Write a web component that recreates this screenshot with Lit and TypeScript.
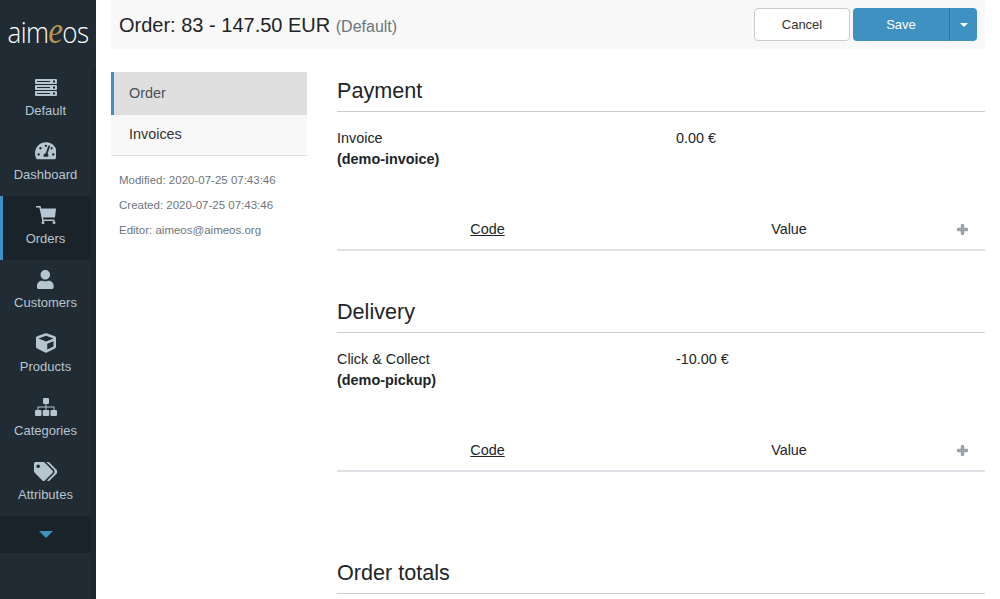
import { LitElement, html, css, svg } from "lit";
import { customElement } from "lit/decorators.js";

const ICONS: Record<string, [string, string]> = {
  server: ["0 0 22 17", "M1 0H21a1 1 0 0 1 1 1V4a1 1 0 0 1-1 1H1a1 1 0 0 1-1-1V1a1 1 0 0 1 1-1zM2 2V3H15V2zM18 1.5V3.5H20V1.5zM1 6H21a1 1 0 0 1 1 1V10a1 1 0 0 1-1 1H1a1 1 0 0 1-1-1V7a1 1 0 0 1 1-1zM2 8V9H15V8zM18 7.5V9.5H20V7.5zM1 12H21a1 1 0 0 1 1 1V16a1 1 0 0 1-1 1H1a1 1 0 0 1-1-1V13a1 1 0 0 1 1-1zM2 14V15H15V14zM18 13.5V15.5H20V13.5z"],
  gauge: ["0 0 576 512", "M288 32C128.94 32 0 160.94 0 320c0 52.8 14.25 102.26 39.06 144.8 5.61 9.62 16.3 15.2 27.44 15.2h443c11.14 0 21.83-5.58 27.44-15.2C561.75 422.26 576 372.8 576 320c0-159.06-128.94-288-288-288zm0 64c14.71 0 26.58 10.13 30.32 23.65-1.11 2.26-2.64 4.23-3.45 6.67l-9.22 27.67c-5.13 3.49-10.97 6.01-17.64 6.01-17.67 0-32-14.33-32-32S270.33 96 288 96zM96 384c-17.67 0-32-14.33-32-32s14.33-32 32-32 32 14.33 32 32-14.33 32-32 32zm48-160c-17.67 0-32-14.33-32-32s14.33-32 32-32 32 14.33 32 32-14.33 32-32 32zm246.77-72.41l-61.33 184C343.13 347.33 352 364.54 352 384c0 11.72-3.38 22.55-8.88 32H232.88c-5.5-9.45-8.88-20.28-8.88-32 0-33.94 26.5-61.43 59.9-63.59l61.34-184.01c4.17-12.56 17.73-19.45 30.36-15.17 12.57 4.19 19.35 17.79 15.17 30.36zm14.66 57.2l15.52-46.55c3.47-1.29 7.13-2.23 11.05-2.23 17.67 0 32 14.33 32 32s-14.33 32-32 32c-11.38-.01-20.89-6.27-26.57-15.22zM480 384c-17.67 0-32-14.33-32-32s14.33-32 32-32 32 14.33 32 32-14.33 32-32 32z"],
  cart: ["0 0 20 18", "M5.2 2.500H20L19 11.500H7zM0 0H4.600L7.500 13.500H18.500V15H6.300L3.400 1.400H0zM7 15a1.500 1.500 0 1 0 0 3a1.500 1.500 0 1 0 0-3zM18 15a1.500 1.500 0 1 0 0 3a1.500 1.500 0 1 0 0-3z"],
  user: ["0 0 448 512", "M224 256c70.7 0 128-57.3 128-128S294.7 0 224 0 96 57.3 96 128s57.3 128 128 128zm89.6 32h-16.7c-22.2 10.2-46.9 16-72.9 16s-50.6-5.8-72.9-16h-16.7C60.2 288 0 348.2 0 422.4V464c0 26.5 21.5 48 48 48h352c26.5 0 48-21.5 48-48v-41.6c0-74.2-60.2-134.4-134.4-134.4z"],
  cube: ["0 0 512 512", "M239.1 6.3l-208 78c-18.7 7-31.1 25-31.1 45v225.1c0 18.2 10.3 34.8 26.5 42.9l208 104c13.5 6.8 29.4 6.8 42.9 0l208-104c16.3-8.1 26.5-24.8 26.5-42.9V129.3c0-20-12.4-37.9-31.1-44.9l-208-78C262 2.2 250 2.2 239.1 6.3zM256 68.4l192 72v1.1l-192 78-192-78v-1.1l192-72zm32 356V275.5l160-65v133.9l-160 80z"],
  sitemap: ["0 0 22 18", "M9 0H13a1 1 0 0 1 1 1V5a1 1 0 0 1-1 1H11.500V8.500H19.500V12H18.500V9.500H11.500V12H10.500V9.500H3.500V12H2.500V8.500H10.500V6H9a1 1 0 0 1-1-1V1a1 1 0 0 1 1-1zM1 12H5.500a1 1 0 0 1 1 1V17a1 1 0 0 1-1 1H1a1 1 0 0 1-1-1V13a1 1 0 0 1 1-1zM8.750 12H13.250a1 1 0 0 1 1 1V17a1 1 0 0 1-1 1H8.750a1 1 0 0 1-1-1V13a1 1 0 0 1 1-1zM16.500 12H21a1 1 0 0 1 1 1V17a1 1 0 0 1-1 1H16.500a1 1 0 0 1-1-1V13a1 1 0 0 1 1-1z"],
  tags: ["0 0 640 512", "M497.941 225.941L286.059 14.059A48 48 0 0 0 252.118 0H48C21.49 0 0 21.49 0 48v204.118a48 48 0 0 0 14.059 33.941l211.882 211.882c18.744 18.745 49.136 18.746 67.882 0l204.118-204.118c18.745-18.745 18.745-49.137 0-67.882zM112 160c-26.51 0-48-21.49-48-48s21.49-48 48-48 48 21.49 48 48-21.49 48-48 48zm513.941 133.823L421.823 497.941c-18.745 18.745-49.137 18.745-67.882 0l-.36-.36L527.64 323.522c16.999-16.999 26.36-39.6 26.36-63.64s-9.362-46.641-26.36-63.64L331.397 0h48.721a48 48 0 0 1 33.941 14.059l211.882 211.882c18.745 18.745 18.745 49.137 0 67.882z"],
};

const NAV = [
  ["server", "Default", 17],
  ["gauge", "Dashboard", 19.5],
  ["cart", "Orders", 18],
  ["user", "Customers", 19],
  ["cube", "Products", 20],
  ["sitemap", "Categories", 18],
  ["tags", "Attributes", 19],
] as const;

@customElement("app-root")
export class AppRoot extends LitElement {
  static styles = css`
    :host { display: block; height: 599px; overflow: hidden; background: #fff; font-family: "Liberation Sans", Arial, sans-serif; font-size: 14.4px; color: #212529; }
    .app { display: flex; height: 599px; overflow: hidden; }
    .side { width: 96px; flex: none; background: #212b33; display: flex; flex-direction: column; }
    .logo { height: 68px; flex: none; display: flex; align-items: flex-start; justify-content: center; padding-top: 13px; box-sizing: border-box; color: #fff; }
    .logo span { display: block; font-family: "Open Sans", sans-serif; font-weight: 300; font-size: 26px; line-height: 36px; letter-spacing: -0.6px; transform: scaleY(1.14); }
    .logo i { font-family: "Liberation Serif", serif; color: #b7965a; font-size: 33px; font-style: italic; }
    .nav { flex: 1; display: flex; flex-direction: column; background: #1e272e; min-height: 0; }
    .nav-inner { width: 91px; flex: 1; background: #212b33; }
    .item { height: 64px; box-sizing: border-box; display: flex; flex-direction: column; align-items: center; padding-top: 8px; color: #b6c6d0; font-size: 13px; line-height: 20px; }
    .item.active { background: #1b232a; border-left: 3px solid #3f91c2; padding-right: 3px; }
    .ico { height: 22px; margin-bottom: 3px; display: flex; align-items: center; justify-content: center; }
    .ico svg { display: block; fill: #b6c6d0; }
    .more { height: 37px; background: #1b232a; display: flex; align-items: center; justify-content: center; }
    .caret { width: 0; height: 0; border-left: 7px solid transparent; border-right: 7px solid transparent; border-top: 7px solid #3f91c2; }
    .main { flex: 1; min-width: 0; padding: 0 15px; display: flex; flex-direction: column; }
    .head { height: 49px; flex: none; background: #f8f8f8; display: flex; align-items: center; padding: 0 8px; box-sizing: border-box; }
    .title { flex: 1; font-size: 20px; color: #212529; padding-top: 2px; }
    .title small { font-size: 16px; color: #6c757d; }
    .btn { height: 33px; box-sizing: border-box; font-size: 13px; display: flex; align-items: center; justify-content: center; border-radius: 4px; }
    .cancel { width: 96px; background: #fff; border: 1px solid #ccc; color: #333; margin-right: 3px; }
    .save { display: flex; height: 33px; color: #fff; font-size: 13px; }
    .save .a { width: 96px; background: #3f91c2; border-radius: 4px 0 0 4px; display: flex; align-items: center; justify-content: center; border-right: 1px solid #2f75a0; }
    .save .b { width: 27px; background: #3f91c2; border-radius: 0 4px 4px 0; display: flex; align-items: center; justify-content: center; }
    .save .b span { width: 0; height: 0; border-left: 4px solid transparent; border-right: 4px solid transparent; border-top: 4px solid #fff; }
    .body { display: flex; flex: 1; min-height: 0; padding-top: 23px; }
    .tabs { width: 196px; flex: none; }
    .tab { height: 41px; background: #f8f8f8; display: flex; align-items: center; padding: 0 0 2px 18px; box-sizing: border-box; border-bottom: 1px solid #e0e0e0; color: #333; }
    .tab.active { height: 43px; background: #dfdfdf; border-left: 3px solid #3f91c2; border-bottom: 0; padding: 0 0 1px 15px; color: #495057; }
    .meta { padding: 12px 8px 0; font-size: 11.5px; color: #6c757d; line-height: 25px; }
    .content { flex: 1; margin-left: 30px; min-width: 0; }
    h2 { margin: 0; font-weight: 400; font-size: 21.6px; line-height: 26px; height: 40px; box-sizing: border-box; padding-top: 6px; border-bottom: 1px solid #ccc; color: #212529; }
    .row { display: flex; padding-top: 16px; line-height: 21px; height: 97px; box-sizing: border-box; }
    .row > div { width: 339px; flex: none; }
    .thead { display: grid; grid-template-columns: 301px 1fr 45px; height: 40px; box-sizing: content-box; align-items: center; border-bottom: 2px solid #dee2e6; }
    .thead .code { text-decoration: underline; text-align: center; }
    .thead .val { text-align: center; }
    .plus { display: flex; justify-content: center; }
    .plus svg { fill: #9aa3b0; display: block; }
    section.s1 { padding-bottom: 42px; }
    section.s2 { padding-bottom: 82px; }
  `;

  private icon(name: string, h: number) {
    const [vb, d] = ICONS[name];
    const [, , w, ht] = vb.split(" ").map(Number);
    return html`<svg width=${(h * w) / ht} height=${h} viewBox=${vb}>${svg`<path d=${d}></path>`}</svg>`;
  }

  private section(title: string, a: string, b: string, v: string, cls: string) {
    return html`<section class=${cls}>
      <h2>${title}</h2>
      <div class="row"><div>${a}<br /><b>${b}</b></div><div>${v}</div></div>
      <div class="thead">
        <div class="code">Code</div>
        <div class="val">Value</div>
        <div class="plus"><svg width="11" height="11" viewBox="0 0 11 11"><path d="M3.800 1a1 1 0 0 1 1-1h1.400a1 1 0 0 1 1 1v2.800H10a1 1 0 0 1 1 1v1.400a1 1 0 0 1-1 1H7.200V10a1 1 0 0 1-1 1H4.800a1 1 0 0 1-1-1V7.200H1a1 1 0 0 1-1-1V4.800a1 1 0 0 1 1-1h2.800z"></path></svg></div>
      </div>
    </section>`;
  }

  render() {
    return html`<div class="app">
      <aside class="side">
        <div class="logo"><span>aim<i>e</i>os</span></div>
        <div class="nav"><div class="nav-inner">
          ${NAV.map(([ic, label, h]) => html`<div class="item ${label === "Orders" ? "active" : ""}">
            <div class="ico">${this.icon(ic, h)}</div><div>${label}</div>
          </div>`)}
          <div class="more"><span class="caret"></span></div>
        </div></div>
      </aside>
      <main class="main">
        <header class="head">
          <div class="title">Order: 83 - 147.50 EUR <small>(Default)</small></div>
          <div class="btn cancel">Cancel</div>
          <div class="save"><div class="a">Save</div><div class="b"><span></span></div></div>
        </header>
        <div class="body">
          <nav class="tabs">
            <div class="tab active">Order</div>
            <div class="tab">Invoices</div>
            <div class="meta">
              <div>Modified: 2020-07-25 07:43:46</div>
              <div>Created: 2020-07-25 07:43:46</div>
              <div>Editor: aimeos@aimeos.org</div>
            </div>
          </nav>
          <div class="content">
            ${this.section("Payment", "Invoice", "(demo-invoice)", "0.00 €", "s1")}
            ${this.section("Delivery", "Click & Collect", "(demo-pickup)", "-10.00 €", "s2")}
            <section><h2>Order totals</h2></section>
          </div>
        </div>
      </main>
    </div>`;
  }
}
